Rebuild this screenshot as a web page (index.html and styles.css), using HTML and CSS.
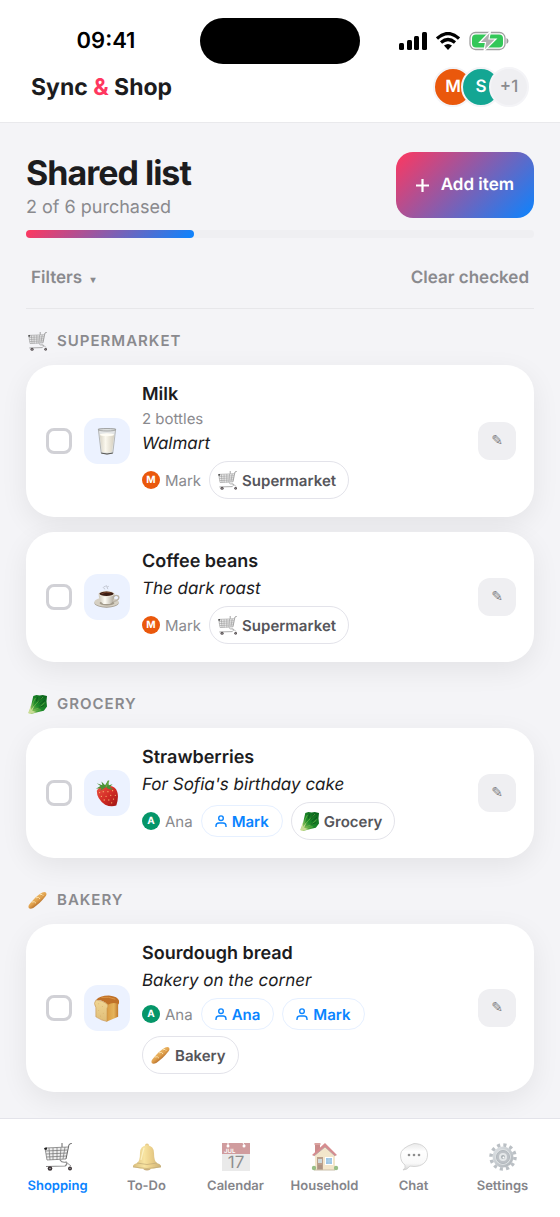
FILE: index.html
```html
<!DOCTYPE html>
<html lang="en">
<head>
  <meta charset="utf-8">
  <meta name="viewport" content="width=device-width, initial-scale=1">
  <title>Sync &amp; Shop</title>
  <link rel="stylesheet" href="styles.css">
</head>
<body>
  <svg class="sprite" aria-hidden="true">
    <defs>
      <linearGradient id="glass" x1="0" x2="1"><stop offset="0" stop-color="#d9d4c6"/><stop offset=".4" stop-color="#fbf8ee"/><stop offset="1" stop-color="#d5cfbf"/></linearGradient>
      <linearGradient id="cup" x1="0" x2="1"><stop offset="0" stop-color="#c9c3b6"/><stop offset=".4" stop-color="#fffdf6"/><stop offset="1" stop-color="#aaa396"/></linearGradient>
      <linearGradient id="berry" x1="0" x2="1" y2="1"><stop offset="0" stop-color="#ec5645"/><stop offset=".5" stop-color="#d32c25"/><stop offset="1" stop-color="#9c1414"/></linearGradient>
      <linearGradient id="leaf" x1="1" x2="0" y2="1"><stop offset="0" stop-color="#08601a"/><stop offset=".55" stop-color="#1d8a2a"/><stop offset="1" stop-color="#a5cf69"/></linearGradient>
      <linearGradient id="crust" x1=".2" y1=".2" x2=".7" y2=".8"><stop offset="0" stop-color="#f3c878"/><stop offset=".55" stop-color="#e0a04c"/><stop offset="1" stop-color="#9c5218"/></linearGradient>
      <linearGradient id="crumb" x2="0" y2="1"><stop offset="0" stop-color="#f0d694"/><stop offset="1" stop-color="#dfbd77"/></linearGradient>
      <linearGradient id="side" x2="1"><stop offset="0" stop-color="#d8993f"/><stop offset=".6" stop-color="#e5b45c"/><stop offset="1" stop-color="#b96d22"/></linearGradient>
      <linearGradient id="gold" x1="0" x2="1"><stop offset="0" stop-color="#b98510"/><stop offset=".4" stop-color="#f3cf55"/><stop offset=".65" stop-color="#dca92a"/><stop offset="1" stop-color="#9d6f0c"/></linearGradient>
      <linearGradient id="bubble" x2="0" y2="1"><stop offset="0" stop-color="#d8d8d8"/><stop offset=".3" stop-color="#ffffff"/><stop offset=".75" stop-color="#f4f4f4"/><stop offset="1" stop-color="#b4b4b4"/></linearGradient>
      <linearGradient id="steel" x2="1" y2="1"><stop offset="0" stop-color="#c3cbd1"/><stop offset="1" stop-color="#6f7982"/></linearGradient>
    </defs>

    <symbol id="cart" viewBox="0 0 28 28">
      <path d="M1 5l23-1-2 12-19 1z" fill="#e4e4e4" opacity=".6"/>
      <path d="M1 5l23-1M1.500 8l22-1M2 11l21-1M2.500 14l20-1M3 17l19-1M1 5l2 12M5 5l1 12M9 5v12M13 4.500V17M17 4.500l-1 12M21 4l-2 12" fill="none" stroke="#7c7c7c" stroke-width=".8"/>
      <path d="M28 0l-3 1.500L22 16M18 0v4" fill="none" stroke="#666" stroke-width="1"/>
      <path d="M16 17q2 3 6 2 2 2-1 4L2 23.500" fill="none" stroke="#8b8b8b" stroke-width="1.200"/>
      <path d="M22 19l5 4" stroke="#999" stroke-width="1"/>
      <path d="M0 5l3-.5v2L1 7z" fill="#222"/>
      <circle cx="6" cy="25.500" r="2.300" fill="#3b3235"/><circle cx="26" cy="25.500" r="2" fill="#3b3235"/>
      <circle cx="6" cy="25.500" r=".8" fill="#aaa"/><circle cx="26" cy="25.500" r=".7" fill="#aaa"/>
    </symbol>

    <symbol id="greens" viewBox="0 0 18 18">
      <path d="M5 1l3-1 3 .5L14 0l4 1-.5 5 .5 5-3 4-5 1-7 2-2-2 2-6z" fill="url(#leaf)"/>
      <path d="M2 15L8 8l6-6M3 15l2-8 2-4M3 15l8-3 5-5M3 15l9-1" fill="none" stroke="#7fbd4f" stroke-width=".6"/>
      <path d="M3 9l-2 6-1 2 2 1 6-2-4-1 2-5-3 4z" fill="#c9dc96"/>
      <path d="M9 2l-1 4M13 2l-3 5M16 5l-5 4M15 10l-5 2" stroke="#0a4e18" stroke-width=".7"/>
    </symbol>

    <symbol id="baguette" viewBox="0 0 18 18">
      <path d="M1 13C5 8 9 4 13.500 1.500c3-1.500 5 .5 3.500 3C13.500 9 9.500 13 5 16c-4 2-5.500-.5-4-3z" fill="url(#crust)"/>
      <path d="M4 11q3-1 4 1M8 7q3-1 4 1M12 4q2-1 3 1" fill="none" stroke="#c98a40" stroke-width=".6"/>
      <path d="M3.500 10.500q3-1 4 1M7.500 6.500q3-1 4 1M11.500 3.500q2-1 3 1" fill="none" stroke="#ffe9b5" stroke-width=".9"/>
    </symbol>

    <symbol id="milk" viewBox="0 0 26 28">
      <path d="M4 1h18l-3 25q-6 2-12 0z" fill="#e3e5e5" stroke="#a5a6a5" stroke-width=".8"/>
      <path d="M5.500 7q8-2 15 0L18 25q-5 1-10 0z" fill="url(#glass)"/>
      <ellipse cx="13" cy="7" rx="7.500" ry="1.500" fill="#fffdf5"/>
      <ellipse cx="13" cy="1.800" rx="9" ry="1.300" fill="#dcdedd" stroke="#8a8c8b" stroke-width=".7"/>
      <path d="M7 26q6 2 12 0" fill="none" stroke="#54534f" stroke-width="1"/>
    </symbol>

    <symbol id="coffee" viewBox="0 0 28 28">
      <path d="M12 5q-4-2 0-3 2-2 2 1M15 5q-2-3 1-3" fill="none" stroke="#b8bcc6" stroke-width=".8"/>
      <ellipse cx="13.500" cy="20" rx="13" ry="5" fill="#9f978a"/>
      <ellipse cx="13.500" cy="19" rx="13" ry="5" fill="#d6d0c3"/>
      <ellipse cx="14" cy="20" rx="8" ry="2.500" fill="#a39b8c"/>
      <path d="M21 13c4-3 7 0 5 3-2 2-4 3-7 2" fill="none" stroke="#bab3a6" stroke-width="1.500"/>
      <path d="M5 10h17q0 9-5 11h-7Q5 18 5 10z" fill="url(#cup)"/>
      <ellipse cx="13.500" cy="10" rx="8.800" ry="3.200" fill="#eae5d9"/>
      <ellipse cx="13.500" cy="10" rx="7.700" ry="2.400" fill="#3c1d13"/>
      <path d="M8 10q5-3 10-1" fill="none" stroke="#8e5639" stroke-width=".8"/>
    </symbol>

    <symbol id="strawberry" viewBox="0 0 28 28">
      <path d="M3 11q3-6 11-5 9-1 11 6 2 6-1 15-6 2-12-1Q3 20 3 11z" fill="url(#berry)"/>
      <path d="M13 7L7 11l1-3-6 1 5-3-4-3 6 2-1-4 4 4 3-5 1 5 4-1-3 3 4 3-6-1z" fill="#4b9236"/>
      <path d="M13 7l3-7" stroke="#6ba944" stroke-width="1.300"/>
      <g fill="#f6b36b"><circle cx="6" cy="13" r=".7"/><circle cx="10" cy="12" r=".7"/><circle cx="15" cy="12" r=".7"/><circle cx="20" cy="11" r=".7"/><circle cx="8" cy="17" r=".7"/><circle cx="13" cy="17" r=".7"/><circle cx="18" cy="16" r=".7"/><circle cx="23" cy="16" r=".7"/><circle cx="11" cy="21" r=".7"/><circle cx="16" cy="21" r=".7"/><circle cx="21" cy="20" r=".7"/><circle cx="19" cy="24" r=".7"/></g>
    </symbol>

    <symbol id="bread" viewBox="0 0 28 28">
      <path d="M13 8q4-3 13-3 2 2 0 5v13l-12 5z" fill="url(#side)"/>
      <path d="M2 5Q6 0 16 0q10 1 11 6 0 2-1 3-6-2-11 1Q9 4 2 5z" fill="#c07128"/>
      <path d="M8 2q8-1 15 2" fill="none" stroke="#dc9748" stroke-width="1"/>
      <path d="M2 5q7 0 12 4 2 2 0 5v14Q8 27 2 23V13Q-1 8 2 5z" fill="url(#crumb)" stroke="#c68f4b" stroke-width=".6"/>
      <g fill="#cba662"><circle cx="5" cy="9" r=".5"/><circle cx="9" cy="12" r=".5"/><circle cx="5" cy="16" r=".5"/><circle cx="10" cy="19" r=".5"/><circle cx="7" cy="22" r=".5"/></g>
    </symbol>

    <symbol id="bell" viewBox="0 0 28 28">
      <ellipse cx="14" cy="24.500" rx="4" ry="3" fill="#a06f13"/>
      <circle cx="14" cy="2.500" r="2" fill="#d6a32b"/>
      <path d="M14 2q7 1 7 8 0 8 3 10 5 2 4 4-14 4-28 0-1-2 4-4 3-2 3-10 0-7 7-8z" fill="url(#gold)"/>
      <path d="M4 20q10 3 20 0M0 24q14 3 28 0" fill="none" stroke="#8f6508" stroke-width=".7"/>
      <path d="M11 5q-2 7-3 12" fill="none" stroke="#fff3b0" stroke-width="1.200" opacity=".7"/>
    </symbol>

    <symbol id="house" viewBox="0 0 28 28">
      <path d="M4 1h5v9H4z" fill="#a12d2c"/><path d="M3.500 0h6v2h-6z" fill="#bd5550"/>
      <path d="M4 11l10-9 10 9v16H4z" fill="#ebd2a2"/>
      <path d="M1 12L14 0l12 12-2 1L14 4 3 13z" fill="#b53034"/>
      <path d="M3 13L14 4l10 9" fill="none" stroke="#77535a" stroke-width=".8"/>
      <path d="M6 14h6v13H6z" fill="#84542f"/><path d="M7 16h4v4H7z" fill="#a9b9bd"/><path d="M7 22h4v4H7z" fill="#6d3e20"/>
      <path d="M14 14h8v8h-8z" fill="#fff"/><path d="M15 15h6v6h-6z" fill="#4f9bd1"/><path d="M15 18h6M18 15v6" stroke="#83bbe0" stroke-width=".6"/>
      <path d="M3 27h21" stroke="#a08b65" stroke-width="1"/>
      <circle cx="3" cy="25" r="2.200" fill="#458b26"/><circle cx="25" cy="25" r="2.200" fill="#458b26"/>
    </symbol>

    <symbol id="chat" viewBox="0 0 28 28">
      <path d="M14 .500C22 .500 27.500 5 27.500 12S22 23.500 14 23.500l-4-.4Q7 27 3 27q3-2 2-5Q.500 19 .500 12 .500 5 14 .500z" fill="url(#bubble)" stroke="#a5a5a5" stroke-width=".8"/>
      <circle cx="9" cy="12" r="1.300" fill="#333"/><circle cx="14" cy="12" r="1.300" fill="#333"/><circle cx="19" cy="12" r="1.300" fill="#333"/>
    </symbol>

    <symbol id="gear" viewBox="0 0 28 28">
      <circle cx="14" cy="14" r="12" fill="none" stroke="#848e96" stroke-width="3.500" stroke-dasharray="3.100 3.183"/>
      <circle cx="14" cy="14" r="9.200" fill="#c3cace" stroke="url(#steel)" stroke-width="2.500"/>
      <circle cx="14" cy="14" r="6.500" fill="#89929a" stroke="#737e87" stroke-width="1"/>
      <circle cx="14" cy="14" r="4" fill="#cfd5d8"/><circle cx="14" cy="14" r="2" fill="#657079"/><circle cx="14.500" cy="14.500" r="1" fill="#fff"/>
    </symbol>

    <symbol id="person" viewBox="0 0 12 12">
      <circle cx="6" cy="3.200" r="2.300" fill="none" stroke="currentColor" stroke-width="1.400"/>
      <path d="M1 12v-1q0-3 3-3h4q3 0 3 3v1" fill="none" stroke="currentColor" stroke-width="1.400"/>
    </symbol>
  </svg>

  <header class="header">
    <div class="status">
      <span class="time">09:41</span>
      <div class="island"></div>
      <div class="status-icons">
        <svg width="28" height="18" viewBox="0 0 28 18" aria-hidden="true">
          <rect y="11" width="5" height="7" rx="1.500"/><rect x="8" y="8" width="5" height="10" rx="1.500"/><rect x="15" y="4" width="5" height="14" rx="1.500"/><rect x="23" width="5" height="18" rx="1.500"/>
        </svg>
        <svg width="24" height="18" viewBox="0 0 24 18" aria-hidden="true">
          <path d="M1 6.500Q12-3.500 23 6.500M5 10.500q7-6 14 0" fill="none" stroke="#000" stroke-width="3.200"/>
          <path d="M8 13.500q4-3 8 0L12 18z"/>
        </svg>
        <svg width="40" height="20" viewBox="0 0 40 20" aria-hidden="true">
          <rect x="1" y="1.500" width="35" height="17" rx="5.500" fill="none" stroke="#a0a0a0" stroke-width="1.300"/>
          <path d="M37.500 7q2 1 2 3t-2 3z" fill="#999"/>
          <rect x="3" y="3.500" width="31" height="13" rx="4" fill="#34c759"/>
          <path d="M21.500 0L10.500 11.500h6l-1.500 8.500 12-12h-7z" fill="#b0b0b0" stroke="#fff" stroke-width="1.200"/>
        </svg>
      </div>
    </div>
    <div class="brand-row">
      <div class="brand">Sync <span class="amp">&amp;</span> Shop</div>
      <div class="members">
        <span class="member mark">M</span>
        <span class="member sofia">S</span>
        <span class="member more">+1</span>
      </div>
    </div>
  </header>

  <main class="main">
    <div class="list-head">
      <div>
        <h1 class="title">Shared list</h1>
        <p class="subtitle">2 of 6 purchased</p>
      </div>
      <button class="add" type="button">
        <svg width="13" height="13" viewBox="0 0 13 13" aria-hidden="true"><path d="M6.500 0v13M0 6.500h13" stroke="#fff" stroke-width="2.200"/></svg>
        Add item
      </button>
    </div>
    <div class="progress"><div class="progress-bar" style="width: 33%"></div></div>
    <div class="toolbar">
      <button class="text-button" type="button">Filters <span class="caret">▾</span></button>
      <button class="text-button" type="button">Clear checked</button>
    </div>

    <section class="section">
      <h2 class="section-title"><svg class="emoji faded"><use href="#cart"/></svg>Supermarket</h2>
      <article class="card">
        <input class="check" type="checkbox" id="milk-check">
        <div class="tile"><svg><use href="#milk"/></svg></div>
        <div class="info">
          <label class="name" for="milk-check">Milk</label>
          <p class="qty">2 bottles</p>
          <p class="note">Walmart</p>
          <div class="meta">
            <span class="author"><span class="dot mark">M</span>Mark</span>
            <button class="chip" type="button"><svg class="emoji faded"><use href="#cart"/></svg>Supermarket</button>
          </div>
        </div>
        <button class="edit" type="button" aria-label="Edit Milk">✎</button>
      </article>
      <article class="card">
        <input class="check" type="checkbox" id="coffee-check">
        <div class="tile"><svg><use href="#coffee"/></svg></div>
        <div class="info">
          <label class="name" for="coffee-check">Coffee beans</label>
          <p class="note">The dark roast</p>
          <div class="meta">
            <span class="author"><span class="dot mark">M</span>Mark</span>
            <button class="chip" type="button"><svg class="emoji faded"><use href="#cart"/></svg>Supermarket</button>
          </div>
        </div>
        <button class="edit" type="button" aria-label="Edit Coffee beans">✎</button>
      </article>
    </section>

    <section class="section">
      <h2 class="section-title"><svg class="emoji"><use href="#greens"/></svg>Grocery</h2>
      <article class="card">
        <input class="check" type="checkbox" id="berry-check">
        <div class="tile"><svg><use href="#strawberry"/></svg></div>
        <div class="info">
          <label class="name" for="berry-check">Strawberries</label>
          <p class="note">For Sofia's birthday cake</p>
          <div class="meta">
            <span class="author"><span class="dot ana">A</span>Ana</span>
            <span class="assignee"><svg><use href="#person"/></svg>Mark</span>
            <button class="chip" type="button"><svg class="emoji"><use href="#greens"/></svg>Grocery</button>
          </div>
        </div>
        <button class="edit" type="button" aria-label="Edit Strawberries">✎</button>
      </article>
    </section>

    <section class="section">
      <h2 class="section-title"><svg class="emoji"><use href="#baguette"/></svg>Bakery</h2>
      <article class="card">
        <input class="check" type="checkbox" id="bread-check">
        <div class="tile"><svg><use href="#bread"/></svg></div>
        <div class="info">
          <label class="name" for="bread-check">Sourdough bread</label>
          <p class="note">Bakery on the corner</p>
          <div class="meta">
            <span class="author"><span class="dot ana">A</span>Ana</span>
            <span class="assignee"><svg><use href="#person"/></svg>Ana</span>
            <span class="assignee"><svg><use href="#person"/></svg>Mark</span>
            <button class="chip" type="button"><svg class="emoji"><use href="#baguette"/></svg>Bakery</button>
          </div>
        </div>
        <button class="edit" type="button" aria-label="Edit Sourdough bread">✎</button>
      </article>
    </section>
  </main>

  <nav class="tabs">
    <a class="tab active" href="#"><svg><use href="#cart"/></svg>Shopping</a>
    <a class="tab" href="#"><svg><use href="#bell"/></svg>To-Do</a>
    <a class="tab" href="#">
      <svg viewBox="0 0 28 28">
        <path d="M0 0h28v28H0z" fill="#d9d9d9"/>
        <path d="M0 0h28v11H0z" fill="#ab4d50"/>
        <path d="M6 0v2M21 0l2 3" stroke="#fff" stroke-width="1"/>
        <circle cx="6" cy="3" r="1.500" fill="#fff"/><circle cx="22" cy="3" r="1.500" fill="#fff"/>
        <text x="2" y="10" class="cal-month">JUL</text>
        <text x="14" y="25" class="cal-day" text-anchor="middle">17</text>
      </svg>
      Calendar
    </a>
    <a class="tab" href="#"><svg><use href="#house"/></svg>Household</a>
    <a class="tab" href="#"><svg><use href="#chat"/></svg>Chat</a>
    <a class="tab" href="#"><svg><use href="#gear"/></svg>Settings</a>
  </nav>
</body>
</html>
```

FILE: styles.css
```css
* {
  box-sizing: border-box;
}
body {
  margin: 0;
  min-height: 100vh;
  display: flex;
  flex-direction: column;
  background: #f4f4f7;
  color: #1c1c1e;
  font-family: Inter, "Liberation Sans", sans-serif;
  text-rendering: geometricPrecision;
}
h1, h2, p {
  margin: 0;
}
button {
  border: 0;
  padding: 0;
  background: none;
  color: inherit;
  font-family: inherit;
  text-rendering: inherit;
  cursor: pointer;
}
.sprite {
  position: absolute;
  width: 0;
  height: 0;
}

/* header */
.header {
  padding-top: 18px;
  background: #fff;
  border-bottom: 1px solid #e9e9ec;
}
.status {
  display: grid;
  grid-template-columns: 1fr 160px 1fr;
  align-items: center;
  padding: 0 12px;
}
.time {
  text-align: center;
  font-size: 22px;
  font-weight: 600;
  color: #000;
}
.island {
  height: 46px;
  border-radius: 23px;
  background: #000;
}
.status-icons {
  display: flex;
  align-items: center;
  justify-content: center;
  gap: 9px;
}
.brand-row {
  display: flex;
  align-items: center;
  justify-content: space-between;
  padding: 3px 31px 15px;
}
.brand {
  font-size: 23px;
  font-weight: 700;
}
.amp {
  color: #ff375f;
}
.members {
  display: flex;
}
.member {
  display: flex;
  align-items: center;
  justify-content: center;
  width: 40px;
  height: 40px;
  border: 2px solid #f4f4f7;
  border-radius: 50%;
  color: #fff;
  font-size: 17px;
  font-weight: 600;
}
.member + .member {
  margin-left: -12px;
}
.mark {
  background: #ea580c;
}
.sofia {
  background: #14a693;
}
.ana {
  background: #059669;
}
.more {
  background: #efeff2;
  color: #8a8a8e;
  font-size: 17px;
  font-weight: 500;
}

/* list heading */
.main {
  flex: 1;
  padding: 29px 26px 26px;
}
.list-head {
  display: flex;
  justify-content: space-between;
}
.title {
  font-size: 34px;
  line-height: 44px;
  letter-spacing: -1px;
}
.subtitle {
  font-size: 18px;
  line-height: 24px;
  color: #8a8a8e;
}
.add {
  display: flex;
  align-items: center;
  gap: 12px;
  height: 66px;
  padding: 0 20px;
  border-radius: 17px;
  background: linear-gradient(135deg, #ff375f, #0a84ff);
  color: #fff;
  font-size: 17px;
  font-weight: 600;
}
.progress {
  height: 8px;
  margin-top: 10px;
  border-radius: 4px;
  background: #efeff2;
}
.progress-bar {
  height: 8px;
  border-radius: 4px;
  background: linear-gradient(135deg, #ff375f, #0a84ff);
}
.toolbar {
  display: flex;
  justify-content: space-between;
  margin: 20px 0;
  padding: 0 5px 10px;
  border-bottom: 1px solid #e7e7ea;
}
.text-button {
  height: 40px;
  color: #8a8a8e;
  font-size: 17px;
  font-weight: 600;
}
.caret {
  margin-left: 4px;
  font-size: 10px;
}

/* sections and cards */
.section + .section {
  margin-top: 30px;
}
.section-title {
  display: flex;
  align-items: center;
  gap: 10px;
  padding-left: 2px;
  margin-bottom: 12px;
  font-size: 15px;
  line-height: 24px;
  font-weight: 600;
  letter-spacing: 1px;
  text-transform: uppercase;
  color: #8a8a8e;
}
.emoji {
  width: 19px;
  height: 19px;
}
.faded {
  opacity: .85;
}
.card {
  display: flex;
  align-items: center;
  gap: 12px;
  padding: 18px 18px 18px 20px;
  border-radius: 28px;
  background: #fff;
  box-shadow: 0 8px 28px rgba(0, 0, 0, .07);
}
.card + .card {
  margin-top: 15px;
}
.check {
  appearance: none;
  flex: none;
  width: 26px;
  height: 26px;
  margin: 0;
  border: 3px solid #d1d1d6;
  border-radius: 8px;
  background: #fff;
}
.check:checked {
  border-color: #0a84ff;
  background: #0a84ff;
}
.tile {
  display: flex;
  flex: none;
  align-items: center;
  justify-content: center;
  width: 46px;
  height: 46px;
  border-radius: 14px;
  background: #ecf2ff;
}
.tile svg {
  width: 26px;
  height: 27px;
}
.info {
  display: flex;
  flex: 1;
  flex-direction: column;
  gap: 2px;
  min-width: 0;
}
.name {
  font-size: 18px;
  line-height: 24px;
  font-weight: 600;
}
.qty {
  font-size: 15px;
  line-height: 20px;
  color: #8a8a8e;
}
.note {
  font-size: 17px;
  line-height: 26px;
  font-style: italic;
}
.meta {
  display: flex;
  flex-wrap: wrap;
  align-items: center;
  gap: 6px 8px;
  margin-top: 2px;
}
.author {
  display: flex;
  align-items: center;
  gap: 5px;
  font-size: 15px;
  color: #8a8a8e;
}
.dot {
  display: flex;
  align-items: center;
  justify-content: center;
  width: 18px;
  height: 18px;
  border-radius: 50%;
  color: #fff;
  font-size: 10px;
  font-weight: 700;
}
.chip {
  display: flex;
  align-items: center;
  gap: 5px;
  height: 38px;
  padding: 0 12px 0 8px;
  border: 1px solid #e3e3ea;
  border-radius: 19px;
  color: #55555a;
  font-size: 15px;
  font-weight: 600;
}
.assignee {
  display: flex;
  align-items: center;
  gap: 5px;
  height: 32px;
  padding: 0 13px;
  border: 1px solid #e6f0ff;
  border-radius: 16px;
  color: #0a84ff;
  font-size: 15px;
  font-weight: 600;
}
.assignee svg {
  width: 12px;
  height: 12px;
}
.edit {
  flex: none;
  width: 38px;
  height: 38px;
  border-radius: 12px;
  background: #efeff2;
  color: #7c7c80;
  font-family: "DejaVu Sans", sans-serif;
  font-size: 14px;
}

/* bottom tabs */
.tabs {
  display: grid;
  grid-template-columns: repeat(6, 1fr);
  padding: 24px 13px 22px;
  border-top: 1px solid #e3e3ea;
  background: #fff;
}
.tab {
  display: flex;
  flex-direction: column;
  align-items: center;
  gap: 6px;
  color: #85858a;
  font-size: 13px;
  line-height: 18px;
  font-weight: 600;
  text-decoration: none;
}
.tab svg {
  width: 28px;
  height: 28px;
  overflow: visible;
  opacity: .55;
}
.tab.active {
  color: #0a84ff;
}
.tab.active svg {
  opacity: 1;
}
.cal-month {
  fill: #fff;
  font-size: 6px;
}
.cal-day {
  fill: #333;
  font-size: 17px;
  font-weight: 400;
}
```
